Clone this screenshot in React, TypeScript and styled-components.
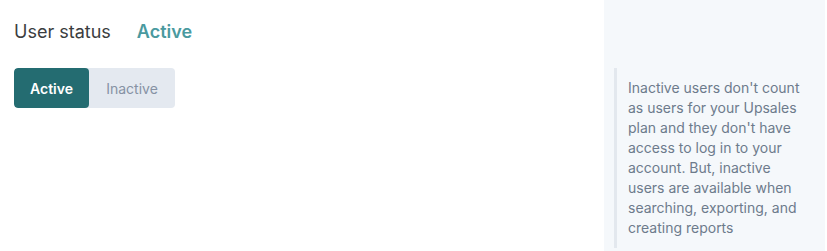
import React from 'react';
import styled, { createGlobalStyle } from 'styled-components';

const GlobalStyle = createGlobalStyle`
  html, body {
    margin: 0;
    padding: 0;
    background: #ffffff;
  }
  body {
    font-family: "Inter", "Noto Sans", Arial, sans-serif;
  }
`;

const Page = styled.div`
  display: flex;
  height: 251px;
  padding-right: 2px;
  box-sizing: border-box;
  overflow: hidden;
`;

const Main = styled.div`
  flex: 1;
  padding: 21px 14px;
`;

const Header = styled.div`
  display: flex;
  align-items: baseline;
  gap: 26px;
  height: 26px;
`;

const Title = styled.span`
  font-size: 18px;
  color: #3b3d40;
  font-weight: 400;
`;

const StatusValue = styled.span`
  font-size: 18px;
  font-weight: 600;
  color: #4a9a9f;
`;

const Toggle = styled.div`
  display: inline-flex;
  margin-top: 21px;
  height: 40px;
  border-radius: 4px;
  overflow: hidden;
  background: #e4e9f0;
`;

const ToggleButton = styled.button<{ $active?: boolean; $width: number }>`
  border: none;
  margin: 0;
  padding: 0;
  width: ${(p) => p.$width}px;
  height: 40px;
  font-family: inherit;
  font-size: 14px;
  font-weight: ${(p) => (p.$active ? 600 : 400)};
  color: ${(p) => (p.$active ? '#ffffff' : '#8692a4')};
  background: ${(p) => (p.$active ? '#246c71' : 'transparent')};
  border-radius: ${(p) => (p.$active ? '4px' : '0')};
  cursor: pointer;
`;

const Side = styled.aside`
  width: 221px;
  background: #f5f8fb;
  padding: 68px 15px 0 10px;
  box-sizing: border-box;
`;

const Note = styled.p`
  margin: 0;
  border-left: 3px solid #e3e8ee;
  padding: 10px 0 10px 11px;
  font-size: 14px;
  line-height: 20px;
  color: #6d7b8c;
`;

export default function App() {
  const [active, setActive] = React.useState(true);
  return (
    <>
      <GlobalStyle />
      <Page>
        <Main>
          <Header>
            <Title>User status</Title>
            <StatusValue>{active ? 'Active' : 'Inactive'}</StatusValue>
          </Header>
          <Toggle>
            <ToggleButton $width={75} $active={active} onClick={() => setActive(true)}>
              Active
            </ToggleButton>
            <ToggleButton $width={86} $active={!active} onClick={() => setActive(false)}>
              Inactive
            </ToggleButton>
          </Toggle>
        </Main>
        <Side>
          <Note>
            Inactive users don't count as users for your Upsales plan and they don't have
            access to log in to your account. But, inactive users are available when
            searching, exporting, and creating reports
          </Note>
        </Side>
      </Page>
    </>
  );
}
